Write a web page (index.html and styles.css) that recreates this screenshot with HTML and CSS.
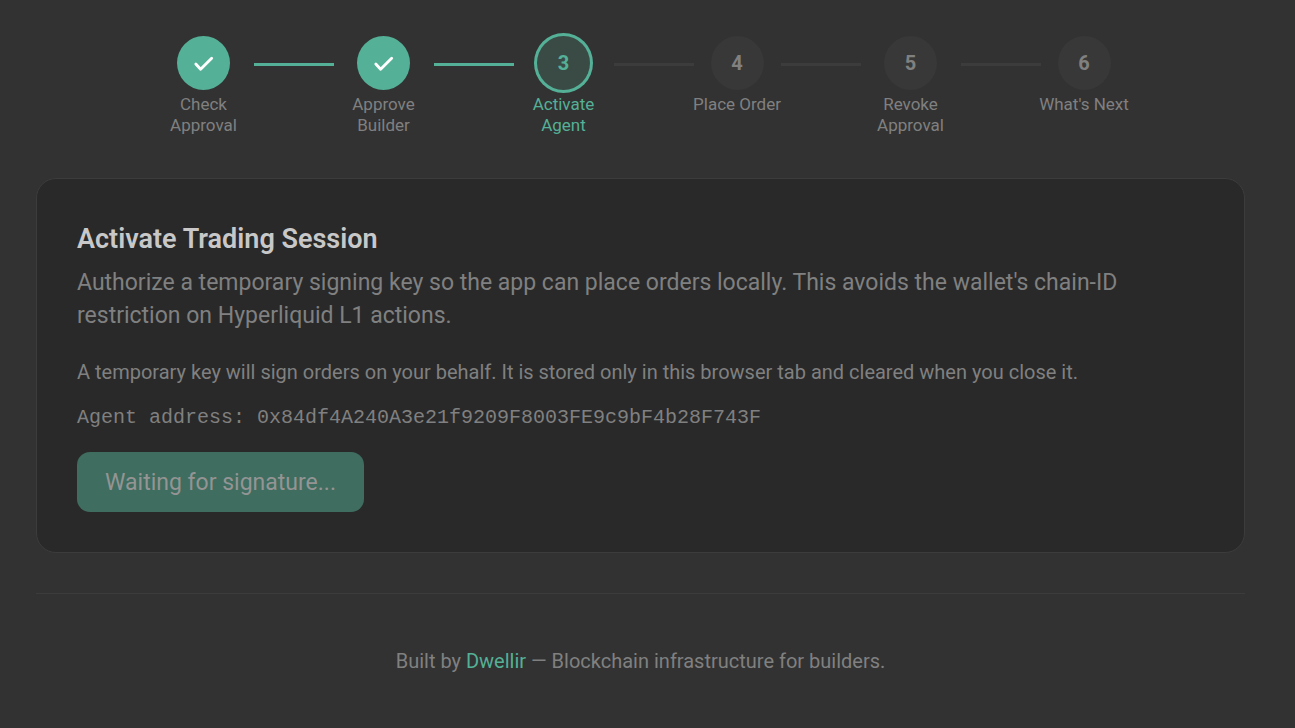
FILE: index.html
```html
<!DOCTYPE html>
<html lang="en">
<head>
<meta charset="utf-8">
<title>Activate Trading Session</title>
<link rel="stylesheet" href="styles.css">
</head>
<body>
<main class="page">
  <ol class="stepper">
    <li class="step done"><span class="dot"><svg class="check" viewBox="0 0 24 24" aria-label="Done"><path d="M4 12.5 9 18 20.5 6.5"/></svg></span><span class="label">Check Approval</span></li>
    <li class="connector filled" aria-hidden="true"></li>
    <li class="step done"><span class="dot"><svg class="check" viewBox="0 0 24 24" aria-label="Done"><path d="M4 12.5 9 18 20.5 6.5"/></svg></span><span class="label">Approve Builder</span></li>
    <li class="connector filled" aria-hidden="true"></li>
    <li class="step active" aria-current="step"><span class="dot">3</span><span class="label">Activate Agent</span></li>
    <li class="connector" aria-hidden="true"></li>
    <li class="step single"><span class="dot">4</span><span class="label">Place Order</span></li>
    <li class="connector" aria-hidden="true"></li>
    <li class="step"><span class="dot">5</span><span class="label">Revoke Approval</span></li>
    <li class="connector" aria-hidden="true"></li>
    <li class="step single"><span class="dot">6</span><span class="label">What's Next</span></li>
  </ol>
  <section class="card">
    <h1 class="title">Activate Trading Session</h1>
    <p class="lead">Authorize a temporary signing key so the app can place orders locally. This avoids the wallet's chain-ID restriction on Hyperliquid L1 actions.</p>
    <p class="note">A temporary key will sign orders on your behalf. It is stored only in this browser tab and cleared when you close it.</p>
    <p class="address">Agent address: 0x84df4A240A3e21f9209F8003FE9c9bF4b28F743F</p>
    <button class="action" type="button" disabled>Waiting for signature...</button>
  </section>
  <footer class="footer">Built by <a class="link" href="#">Dwellir</a> — Blockchain infrastructure for builders.</footer>
</main>
</body>
</html>
```
FILE: styles.css
```css
* { box-sizing: border-box; }
body {
  margin: 0;
  background: #323232;
  color: #808080;
  font-family: Roboto, sans-serif;
  font-size: 20px;
  line-height: 30px;
}
.page { padding: 36px 50px 0 36px; }
.stepper {
  display: flex;
  justify-content: center;
  align-items: flex-start;
  margin: 0 0 42px;
  padding: 0;
  list-style: none;
}
.step {
  display: flex;
  flex-direction: column;
  align-items: center;
  gap: 4px;
  width: 100px;
}
.step.single {
  width: 87px;
  white-space: nowrap;
}
.dot {
  display: flex;
  align-items: center;
  justify-content: center;
  width: 53px;
  height: 54px;
  border-radius: 50%;
  background: #383838;
  font-weight: 700;
}
.label {
  padding: 0 7px;
  font-size: 17px;
  line-height: 21px;
  text-align: center;
}
.connector {
  flex: 0 1 80px;
  height: 3px;
  margin-top: 27px;
  background: #3c3c3c;
}
.filled, .done .dot { background: #54b096; }
.active .dot {
  background: #3a4b46;
  box-shadow: 0 0 0 3px #54b096;
}
.active { color: #54b096; }
.check {
  width: 23px;
  height: 23px;
  fill: none;
  stroke: #fff;
  stroke-width: 3;
  stroke-linecap: round;
  stroke-linejoin: round;
}
.card {
  padding: 40px;
  border: 1px solid #3c3c3c;
  border-radius: 20px;
  background: #292929;
}
.title {
  margin: 0 0 7px;
  color: #c8c8c8;
  font-size: 27px;
  font-weight: 600;
  line-height: 40px;
}
.lead {
  margin: 0 0 25px;
  font-size: 23px;
  line-height: 33px;
}
.note { margin: 0 0 16px; }
.address {
  margin: 0 0 19px;
  font-family: "Liberation Mono", monospace;
}
.action {
  display: block;
  padding: 16px 28px 14px;
  border: 0;
  border-radius: 13px;
  background: #3f6d5f;
  color: #949494;
  font: 23px/30px Roboto, sans-serif;
}
.footer {
  margin-top: 40px;
  padding: 52px 0;
  border-top: 1px solid #3c3c3c;
  text-align: center;
}
.link { color: #54b096; text-decoration: none; }
```
